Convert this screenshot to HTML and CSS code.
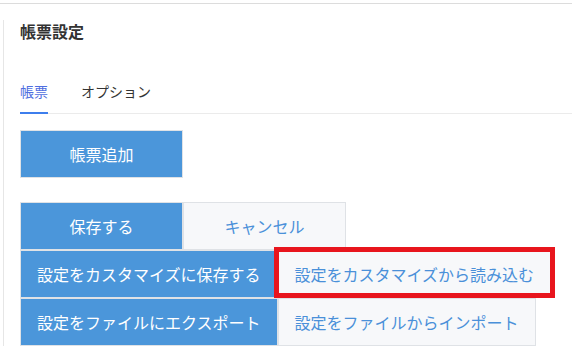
FILE: index.html
```html
<!DOCTYPE html>
<html lang="ja">

<head>
    <meta charset="UTF-8">
    <meta name="viewport" content="width=device-width, initial-scale=1.0">
    <title>帳票設定</title>
    <link rel="stylesheet" href="styles.css">
</head>

<body>
    <div class="page">
        <div class="panel">
            <h2 class="panel-title">帳票設定</h2>

            <div class="tabs">
                <div class="tab active">帳票</div>
                <div class="tab">オプション</div>
            </div>

            <button class="btn btn-primary add-btn">帳票追加</button>

            <div class="btn-group">
                <div class="btn-row">
                    <button class="btn btn-primary">保存する</button>
                    <button class="btn btn-default">キャンセル</button>
                </div>
                <div class="btn-row">
                    <button class="btn btn-primary">設定をカスタマイズに保存する</button>
                    <button class="btn btn-default highlight">設定をカスタマイズから読み込む</button>
                </div>
                <div class="btn-row">
                    <button class="btn btn-primary">設定をファイルにエクスポート</button>
                    <button class="btn btn-default">設定をファイルからインポート</button>
                </div>
            </div>
        </div>
    </div>
</body>

</html>
```

FILE: styles.css
```css
/* Reset */
* {
    margin: 0;
    padding: 0;
    box-sizing: border-box;
}

body {
    font-family: "Noto Sans CJK JP", "Noto Sans", sans-serif;
    background: #ffffff;
    color: #333333;
}

.page {
    margin-top: 3px;
    border-top: 1px solid #dcdcdc;
    padding-top: 16px;
}

.panel {
    margin-left: 3px;
    border-left: 1px solid #e6e6e6;
    padding-left: 16px;
}

.panel-title {
    font-size: 16px;
    line-height: 22px;
    font-weight: bold;
    color: #333333;
}

/* Tabs */
.tabs {
    display: flex;
    margin-top: 39px;
    border-bottom: 1px solid #ebebeb;
}

.tab {
    font-size: 14px;
    line-height: 20px;
    padding-bottom: 11px;
    margin-right: 33px;
    margin-bottom: -1px;
    border-bottom: 2px solid transparent;
    color: #333333;
    cursor: pointer;
}

.tab.active {
    color: #4f6ee0;
    border-bottom-color: #3d7eed;
}

/* Buttons */
.btn {
    display: block;
    height: 48px;
    min-width: 163px;
    padding: 0 16px;
    border: 1px solid #dfe2e6;
    font-family: inherit;
    font-size: 16px;
    white-space: nowrap;
    cursor: pointer;
}

.btn-primary {
    background: #4b96da;
    color: #ffffff;
}

.btn-default {
    background: #f7f8fa;
    color: #4a90d9;
}

.add-btn {
    margin-top: 16px;
}

.btn-group {
    margin-top: 24px;
}

.btn-row {
    display: flex;
}

.highlight {
    position: relative;
}

.highlight::after {
    content: "";
    position: absolute;
    top: -4px;
    bottom: -1px;
    left: -5px;
    right: -5px;
    border: 5px solid #e8151d;
    pointer-events: none;
}
```
